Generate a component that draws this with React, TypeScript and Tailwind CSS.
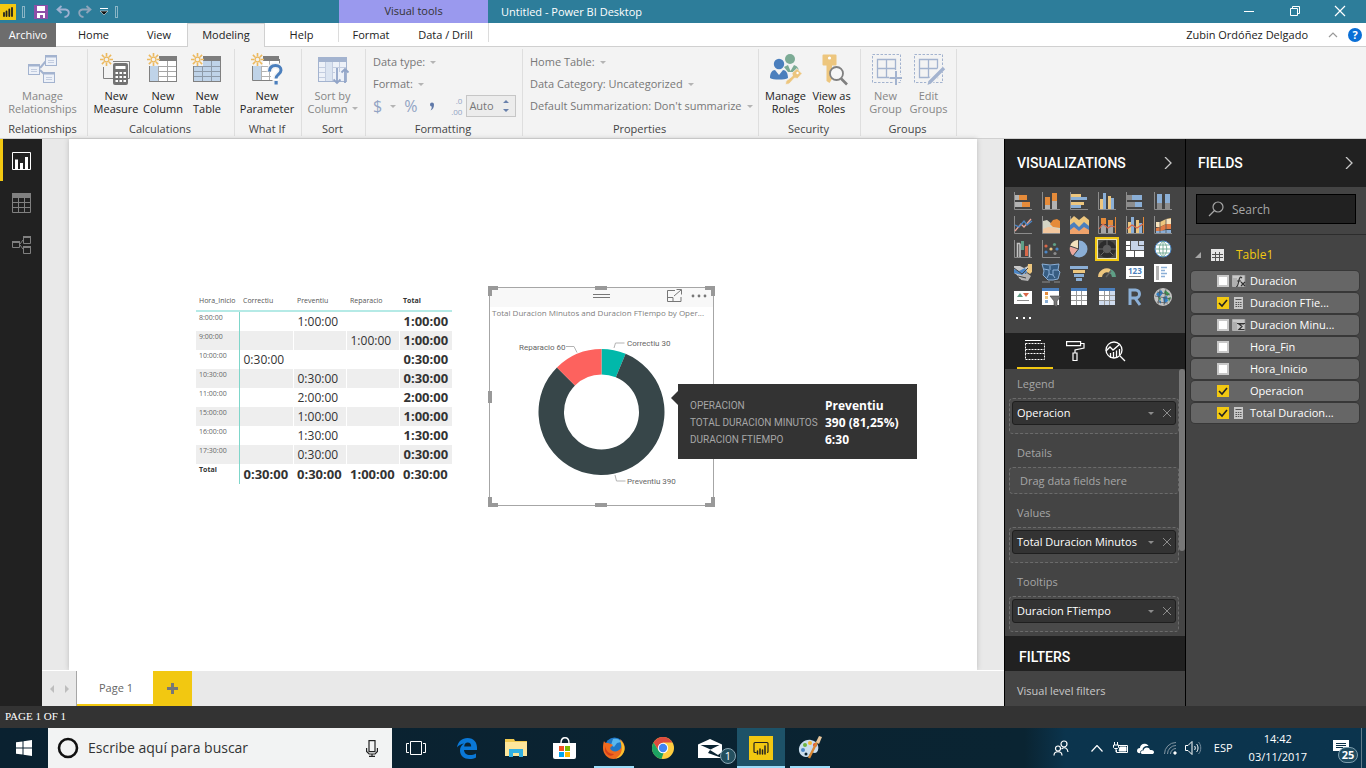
import React, { useState } from 'react';
import { clsx } from 'clsx';

// ── Small shared glyphs ───────────────────────────────────────────────────────
function Caret({ className = 'fill-[#b4b4b4]' }: { className?: string }) {
  return (
    <svg viewBox="0 0 6 3" className={clsx('w-[6px] h-[3px] shrink-0', className)}>
      <path d="M0 0h6L3 3z" />
    </svg>
  );
}

function Sun() {
  return (
    <g stroke="#ecb95f" strokeWidth="1.6" fill="none">
      <circle cx="6.5" cy="6.5" r="2.4" strokeWidth="1.2" />
      <path d="M6.5 0v3.4M6.5 9.6V13M0 6.5h3.4M9.6 6.5H13M1.9 1.9l2.3 2.3M8.8 8.8l2.3 2.3M1.9 11.1l2.3-2.3M8.8 4.2l2.3-2.3" />
    </g>
  );
}

// ── Ribbon icons (32 x 32) ────────────────────────────────────────────────────
const ribbonIcons: Record<string, React.ReactNode> = {
  relationships: (
    <g stroke="#a3b3cf" fill="#edf1f8">
      <path d="M13 15l6-7M13 17l6 6" strokeWidth="2" />
      <rect x="18.5" y="2.5" width="11" height="10" />
      <rect x="1.5" y="11.5" width="11" height="10" />
      <rect x="16.5" y="19.5" width="11" height="10" />
      <path d="M18 3.5h12M1 12.5h12M16 20.5h12" strokeWidth="2" />
      <path d="M21 7.5h6M21 9.5h6M4 16.5h6M4 18.5h6M19 24.5h6M19 26.5h6" stroke="#c3cde0" />
    </g>
  ),
  measure: (
    <g>
      <path d="M13 8.5h16.500v17h-4M3.500 14v11.500h10" fill="none" stroke="#808080" />
      <rect x="13" y="10" width="15" height="22" rx="2" fill="#737373" />
      <rect x="15.5" y="13" width="10" height="3" fill="#fff" />
      <path d="M15.500 20h2.500M19.500 20h2.500M23.500 20h2.500M15.500 24h2.500M19.500 24h2.500M23.500 24h2.500M15.500 28h2.500M19.500 28h2.500M23.500 28h2.500" stroke="#fff" strokeWidth="2" />
      <Sun />
    </g>
  ),
  column: (
    <g>
      <rect x="2.5" y="5.5" width="27" height="23" fill="#fff" stroke="#808080" />
      <rect x="3" y="8" width="8" height="20" fill="#bfd3e8" />
      <path d="M11.500 8v20M20.500 8v20M11 13.500h18M11 18.500h18M11 23.500h18" stroke="#a6a6a6" />
      <path d="M11 3h19v5H11z" fill="#7d7d7d" />
      <path d="M0 0h12v13H0z" fill="#f3f3f3" />
      <Sun />
    </g>
  ),
  table: (
    <g>
      <rect x="2.5" y="5.5" width="27" height="23" fill="#bfd3e8" stroke="#808080" />
      <path d="M11.500 8v20M20.500 8v20M3 13.500h26M3 18.500h26M3 23.500h26" stroke="#8d9aa8" />
      <path d="M11 3h19v5H11z" fill="#7d7d7d" />
      <path d="M0 0h12v13H0z" fill="#f3f3f3" />
      <Sun />
    </g>
  ),
  parameter: (
    <g>
      <path d="M1.500 12v15.500h20M28.500 6v6" fill="none" stroke="#808080" />
      <rect x="2" y="8" width="26" height="19" fill="#fff" />
      <rect x="2" y="12" width="8" height="15" fill="#bfd3e8" />
      <path d="M10.500 8v19M18.500 8v19M10 13.500h18M10 18.500h10M10 23.500h10" stroke="#b3b3b3" />
      <path d="M11 3h17v5H11z" fill="#7d7d7d" />
      <path d="M0 0h12v13H0z" fill="#f3f3f3" />
      <path d="M18.500 18.500c0-4 2.500-6 6-6s5.500 2 5.500 4.700c0 4-5 4.300-5 8.300" fill="none" stroke="#f3f3f3" strokeWidth="6" />
      <path d="M18.500 18.500c0-4 2.500-6 6-6s5.500 2 5.500 4.700c0 4-5 4.300-5 8.300" fill="none" stroke="#4b7fbd" strokeWidth="3" />
      <rect x="23.5" y="28" width="3.2" height="3.5" fill="#4b7fbd" />
      <Sun />
    </g>
  ),
  sort: (
    <g>
      <rect x="1.5" y="4.5" width="28" height="24" fill="#edf1f8" stroke="#a3b3cf" />
      <path d="M1 4h29v5H1z" fill="#a3b3cf" />
      <path d="M8.500 9v19M15.500 9v19M22.500 9v10M2 14.500h27M2 19.500h16M2 24.500h14" stroke="#c3cde0" />
      <path d="M9 9h6v19H9z" fill="#dbe4f1" />
      <path d="M20 15v15M16.500 26.500L20 30l3.500-3.500M28 30V16M24.500 19.500L28 16l3.500 3.500" fill="none" stroke="#91a4c7" strokeWidth="1.8" />
    </g>
  ),
  roles: (
    <g>
      <circle cx="20" cy="6" r="5" fill="#7cab95" />
      <path d="M14 14l4-2 2.500 6 3.500-6c3 1 5 3 5 7H18z" fill="#7cab95" />
      <circle cx="9" cy="11" r="5.2" fill="#4b7fbd" />
      <path d="M0 25c0-5 2-8 5-8l4 5 4-5c3 0 5 3 5 8-3 2-15 2-18 0z" fill="#4b7fbd" />
      <path d="M22 20l5-4.500 5 5-4.500 5-3-.5-5.500 6-3.500.5.500-3.500 6.500-5z" fill="#edc67e" stroke="#f3f3f3" strokeWidth=".8" />
      <circle cx="27.5" cy="20" r="1.2" fill="#fff" />
    </g>
  ),
  viewas: (
    <g>
      <path d="M7.500 1.500h12a1 1 0 011 1v9a1 1 0 01-1 1h-3.500V26l-2.500 4-3-2V12.500H7.500a1 1 0 01-1-1v-9a1 1 0 011-1z" fill="#edc67e" />
      <circle cx="13.5" cy="5" r="1.6" fill="#fff" />
      <circle cx="20.5" cy="20.5" r="6.5" fill="#f6f6f6" stroke="#808080" strokeWidth="1.8" />
      <path d="M25 25.500l6 6" stroke="#808080" strokeWidth="2.6" />
    </g>
  ),
  newgroup: (
    <g fill="none" stroke="#a3b3cf">
      <rect x="2.5" y="1.5" width="28" height="28" strokeDasharray="2.5 1.5" />
      <path d="M7.500 6.500h18v18h-18zM16.500 6.500v18M7.500 15.500h18" strokeWidth="1.3" />
      <path d="M26 17v15M19 24.500h14" stroke="#f3f3f3" strokeWidth="5" />
      <path d="M26 18v14M19.500 25h12.500" strokeWidth="2" />
    </g>
  ),
  editgroup: (
    <g fill="none" stroke="#a3b3cf">
      <rect x="1.5" y="1.5" width="28" height="28" strokeDasharray="2.5 1.5" />
      <path d="M6.500 6.500h18v18h-18zM15.500 6.500v18M6.500 15.500h18" strokeWidth="1.3" />
      <path d="M15 31L30 14" stroke="#f3f3f3" strokeWidth="6" />
      <path d="M16.500 29.500L31 15" strokeWidth="3.4" />
      <path d="M14.500 32l1-4 2.500 2.500z" fill="#a3b3cf" stroke="none" />
    </g>
  ),
};

interface RibbonButtonProps {
  icon: string;
  lines: string[];
  width: string;
  disabled?: boolean;
  caret?: boolean;
}

function RibbonButton({ icon, lines, width, disabled = false, caret = false }: RibbonButtonProps) {
  return (
    <button
      disabled={disabled}
      className={clsx('flex flex-col items-center justify-start shrink-0 pt-1 whitespace-nowrap', width, disabled ? 'text-[#868686]' : 'text-[#222]')}
    >
      <svg viewBox="0 0 32 32" className="w-8 h-8 mb-1 overflow-visible">{ribbonIcons[icon]}</svg>
      <span className="leading-[13px]">{lines[0]}</span>
      <span className="leading-[13px] flex items-center gap-1">
        {lines[1]}
        {caret && <Caret />}
      </span>
    </button>
  );
}

function RibbonGroup({ title, width, children }: { title: string; width: string; children: React.ReactNode }) {
  return (
    <section className={clsx('flex flex-col shrink-0 border-r border-[#dedede]', width)}>
      <div className="flex-1 flex justify-center pr-[2px]">{children}</div>
      <h2 className="text-center leading-[14px] pr-[2px] text-[#444]">{title}</h2>
    </section>
  );
}

function PropertyMenu({ label }: { label: string }) {
  return (
    <button disabled className="h-[22px] flex items-center gap-[5px] whitespace-nowrap">
      {label}
      <Caret />
    </button>
  );
}

function Ribbon() {
  return (
    <div className="h-[92px] shrink-0 bg-[#f3f3f3] border-b border-[#d0d0d0] flex pt-[2px] pb-[2px] text-[11px] text-[#777] overflow-hidden">
      <RibbonGroup title="Relationships" width="w-[88px]">
        <RibbonButton icon="relationships" lines={['Manage', 'Relationships']} width="w-[80px]" disabled />
      </RibbonGroup>
      <RibbonGroup title="Calculations" width="w-[147px]">
        <RibbonButton icon="measure" lines={['New', 'Measure']} width="w-12" />
        <RibbonButton icon="column" lines={['New', 'Column']} width="w-[46px]" />
        <RibbonButton icon="table" lines={['New', 'Table']} width="w-[42px]" />
      </RibbonGroup>
      <RibbonGroup title="What If" width="w-[67px]">
        <RibbonButton icon="parameter" lines={['New', 'Parameter']} width="w-16" />
      </RibbonGroup>
      <RibbonGroup title="Sort" width="w-16">
        <RibbonButton icon="sort" lines={['Sort by', 'Column']} width="w-14" disabled caret />
      </RibbonGroup>
      <RibbonGroup title="Formatting" width="w-[157px]">
        <div className="flex-1 pl-[7px] pt-[2px]">
          <PropertyMenu label="Data type:" />
          <PropertyMenu label="Format:" />
          <div className="h-[22px] flex items-center text-[#92a4c4]">
            <button disabled className="flex items-center gap-2 text-base" aria-label="Currency">
              <span>$</span>
              <Caret />
            </button>
            <button disabled className="ml-2 text-base" aria-label="Percent">%</button>
            <button disabled className="ml-3 w-2 h-[22px] flex items-center" aria-label="Thousands separator">
              <svg viewBox="0 0 6 9" className="w-[6px] h-[9px]">
                <path d="M1 2.500a2 2 0 114 0c0 3-1 5-3.500 6 1-1.500 1.300-2.500 1.200-4C1.700 4.500 1 3.500 1 2.500z" fill="#5f78a8" />
              </svg>
            </button>
            <label htmlFor="decimals" className="ml-3 mr-1 flex flex-col items-end text-[8px] leading-[11px] w-[13px]">
              <span>.0</span>
              <span>.00</span>
            </label>
            <div className="w-[50px] h-[22px] border border-[#c6c6c6] bg-[#ececec] flex items-center justify-between pl-[2px] pr-[6px] text-[#777]">
              <input id="decimals" disabled defaultValue="Auto" className="w-7 bg-transparent outline-none" />
              <svg viewBox="0 0 6 12" className="w-[6px] h-3 fill-[#6880ab]">
                <path d="M0 3l3-3 3 3zM0 9l3 3 3-3z" />
              </svg>
            </div>
          </div>
        </div>
      </RibbonGroup>
      <RibbonGroup title="Properties" width="w-[236px]">
        <div className="flex-1 pl-[7px] pt-[2px]">
          <PropertyMenu label="Home Table:" />
          <PropertyMenu label="Data Category: Uncategorized" />
          <PropertyMenu label="Default Summarization: Don't summarize" />
        </div>
      </RibbonGroup>
      <RibbonGroup title="Security" width="w-[102px]">
        <RibbonButton icon="roles" lines={['Manage', 'Roles']} width="w-[46px]" />
        <RibbonButton icon="viewas" lines={['View as', 'Roles']} width="w-[46px]" />
      </RibbonGroup>
      <RibbonGroup title="Groups" width="w-24">
        <RibbonButton icon="newgroup" lines={['New', 'Group']} width="w-[42px]" disabled />
        <RibbonButton icon="editgroup" lines={['Edit', 'Groups']} width="w-11" disabled />
      </RibbonGroup>
    </div>
  );
}

// ── Title bar and tabs ────────────────────────────────────────────────────────
function TitleBar() {
  return (
    <header className="h-[23px] shrink-0 bg-[#2d7d9a] flex text-white">
      <div className="w-[339px] flex items-center">
        <span className="w-4 h-4 bg-[#f2c811]">
          <svg viewBox="0 0 16 16" className="w-4 h-4">
            <path d="M4 12V9M6.500 12V7.500M9.300 12V5.500M12 12V4" stroke="#222" strokeWidth="1.8" strokeLinecap="round" />
          </svg>
        </span>
        <span className="ml-[6px] w-[3px] h-3 border border-[#8ab5c6]" />
        <button aria-label="Save" className="ml-[9px]">
          <svg viewBox="0 0 14 14" className="w-[14px] h-[14px]">
            <path d="M0 0h14v14H0z" fill="#8e4fa8" />
            <path d="M3 1h8v5H3zM3 8h8v5H9v-3H6v3H3z" fill="#fff" />
          </svg>
        </button>
        <button aria-label="Undo" className="ml-2">
          <svg viewBox="0 0 14 13" className="w-[14px] h-[13px]" fill="none" stroke="#9fb1d1" strokeWidth="1.8">
            <path d="M5.500 1L1.500 4.500l4 3.500M2 4.500h7.500c5 1 4 7-1 7.500" />
          </svg>
        </button>
        <button aria-label="Redo" className="ml-2">
          <svg viewBox="0 0 14 13" className="w-[14px] h-[13px]" fill="none" stroke="#8fa5bb" strokeWidth="1.8">
            <path d="M8.500 1l4 3.500-4 3.500M12 4.500H4.500c-5 1-4 7 1 7.500" />
          </svg>
        </button>
        <button aria-label="Customize toolbar" className="ml-2">
          <svg viewBox="0 0 8 7" className="w-2 h-[7px]">
            <path d="M0 .5h8" stroke="#fff" />
            <path d="M0 3h8L4 7z" fill="#111" stroke="#dfe9ed" strokeWidth=".6" />
          </svg>
        </button>
        <span className="ml-[7px] w-[3px] h-3 border border-[#8ab5c6]" />
      </div>
      <div className="w-[149px] bg-[#9a99ee] text-[#333] text-[11px] leading-[21px] text-center">Visual tools</div>
      <h1 className="flex-1 pl-[13px] text-[11px] leading-[23px]">Untitled - Power BI Desktop</h1>
      <div className="w-[138px] flex items-center justify-between pl-[15px] pr-5 pb-[2px]">
        <button aria-label="Minimize">
          <svg viewBox="0 0 12 12" className="w-3 h-3"><path d="M1 6.500h10" stroke="#fff" /></svg>
        </button>
        <button aria-label="Restore">
          <svg viewBox="0 0 12 12" className="w-3 h-3" fill="none" stroke="#fff"><path d="M1.500 3.500h7v7h-7zM3.500 3.500v-2h7v7h-2" /></svg>
        </button>
        <button aria-label="Close">
          <svg viewBox="0 0 12 12" className="w-3 h-3" stroke="#fff" strokeWidth="1.2"><path d="M1 1l10 10M11 1L1 11" /></svg>
        </button>
      </div>
    </header>
  );
}

function TabRow() {
  return (
    <nav className="h-6 shrink-0 bg-white flex text-[11px] text-[#222] shadow-[inset_0_-1px_0_#d0d0d0]">
      <button className="w-14 bg-[#6d6d6d] text-white">Archivo</button>
      <button className="w-[75px]">Home</button>
      <button className="w-14">View</button>
      <button className="w-[78px] bg-[#f3f3f3] border border-b-0 border-[#d0d0d0]">Modeling</button>
      <button className="w-[73px]">Help</button>
      <div className="w-[151px] flex border-x border-[#dcdcdc] mb-[5px]">
        <button className="w-16 h-6">Format</button>
        <button className="w-[85px] h-6">Data / Drill</button>
      </div>
      <div className="flex-1 flex items-center justify-end">
        <span className="mr-5">Zubin Ordóñez Delgado</span>
        <button aria-label="Collapse ribbon" className="mr-[10px]">
          <svg viewBox="0 0 10 6" className="w-[10px] h-[6px]" fill="none" stroke="#999" strokeWidth="1.2"><path d="M1 5l4-4 4 4" /></svg>
        </button>
        <button aria-label="Help" className="w-[14px] h-[14px] mr-1 rounded-full bg-[#0a6fd6] text-white font-bold leading-[14px]">?</button>
      </div>
    </nav>
  );
}

// ── View switcher on the left ─────────────────────────────────────────────────
function ViewBar() {
  return (
    <nav className="w-[42px] shrink-0 bg-[#212121] flex flex-col">
      <button aria-label="Report" className="h-[42px] border-l-[3px] border-[#f2c811] pl-[9px] pt-[2px]">
        <svg viewBox="0 0 20 20" className="w-5 h-5">
          <path d="M.5 1.500h18v17H.5z" fill="none" stroke="#fff" />
          <path d="M4.500 18V8.500M9.500 18v-6M14.500 18V6" stroke="#fff" strokeWidth="3" />
        </svg>
      </button>
      <button aria-label="Data" className="h-[42px] pl-3 pt-[2px]">
        <svg viewBox="0 0 20 20" className="w-5 h-5" stroke="#808080" fill="none">
          <path d="M.5.500h18v19H.5zM6.500 4v15M12.500 4v15M1 9.500h18M1 14.500h18" />
          <path d="M0 2.500h19" strokeWidth="5" />
        </svg>
      </button>
      <button aria-label="Relationships" className="h-[42px] pl-3 pt-[2px]">
        <svg viewBox="0 0 20 20" className="w-5 h-5" stroke="#808080" fill="none">
          <path d="M.5 6.500h7v6h-7zM11.500 1.500h7v7h-7zM11.500 11.500h7v7h-7zM8 9l3-4M8 10l3 4" />
          <path d="M0 7h8M11 2h8M11 12h8" strokeWidth="2" />
        </svg>
      </button>
    </nav>
  );
}

// ── Matrix visual ─────────────────────────────────────────────────────────────
const columns = ['Correctiu', 'Preventiu', 'Reparacio'];
const rows = [
  { hour: '8:00:00', cells: ['', '1:00:00', ''], total: '1:00:00' },
  { hour: '9:00:00', cells: ['', '', '1:00:00'], total: '1:00:00' },
  { hour: '10:00:00', cells: ['0:30:00', '', ''], total: '0:30:00' },
  { hour: '10:30:00', cells: ['', '0:30:00', ''], total: '0:30:00' },
  { hour: '11:00:00', cells: ['', '2:00:00', ''], total: '2:00:00' },
  { hour: '15:00:00', cells: ['', '1:00:00', ''], total: '1:00:00' },
  { hour: '16:00:00', cells: ['', '1:30:00', ''], total: '1:30:00' },
  { hour: '17:30:00', cells: ['', '0:30:00', ''], total: '0:30:00' },
];

function Matrix() {
  return (
    <table className="absolute left-[127px] top-[153px] w-[256px] table-fixed border-collapse text-left text-[#333]">
      <colgroup>
        <col className="w-[43px]" />
        <col className="w-[54px]" />
        <col className="w-[53px]" />
        <col className="w-[53px]" />
        <col className="w-[53px]" />
      </colgroup>
      <thead>
        <tr className="h-[19px] border-b-2 border-[#b5eae6] text-[7px] leading-[10px] text-[#555]">
          <th className="p-0 pl-[3px] font-normal">Hora_Inicio</th>
          {columns.map((column) => (
            <th key={column} className="p-0 pl-1 font-normal">{column}</th>
          ))}
          <th className="p-0 pl-1 font-bold text-[#333]">Total</th>
        </tr>
      </thead>
      <tbody className="text-xs leading-[19px]">
        {rows.map((row) => (
          <tr key={row.hour} className="h-[19px] even:bg-[#eee]">
            <th className="p-0 pl-[3px] pt-[1px] align-top text-[7px] leading-[10px] font-normal text-[#666] border-r border-[#7fd6ca]">{row.hour}</th>
            {row.cells.map((cell, i) => (
              <td key={i} className="p-0 pl-1 border-r border-white">{cell}</td>
            ))}
            <td className="p-0 pl-1 text-[13px] font-bold">{row.total}</td>
          </tr>
        ))}
        <tr className="h-5 text-[13px] font-bold">
          <th className="p-0 pl-[3px] pt-[1px] align-top text-[7px] leading-[10px] border-r border-[#7fd6ca]">Total</th>
          <td className="p-0 pl-1">0:30:00</td>
          <td className="p-0 pl-1">0:30:00</td>
          <td className="p-0 pl-1">1:00:00</td>
          <td className="p-0 pl-1">0:30:00</td>
        </tr>
      </tbody>
    </table>
  );
}

// ── Donut visual ──────────────────────────────────────────────────────────────
const slices = [
  { name: 'Correctiu', value: 30, color: '#01b8aa' },
  { name: 'Preventiu', value: 390, color: '#374649' },
  { name: 'Reparacio', value: 60, color: '#fd625e' },
];

function point(radius: number, fraction: number) {
  const angle = fraction * Math.PI * 2;
  return `${112.5 + radius * Math.sin(angle)} ${125 - radius * Math.cos(angle)}`;
}

function slicePath(start: number, end: number) {
  const large = end - start > 0.5 ? 1 : 0;
  return `M${point(63, start)}A63 63 0 ${large} 1 ${point(63, end)}L${point(37.5, end)}A37.5 37.5 0 ${large} 0 ${point(37.5, start)}Z`;
}

function Donut() {
  const total = slices.reduce((sum, slice) => sum + slice.value, 0);
  let start = 0;
  return (
    <section className="absolute left-[420px] top-[148px] w-[225px] h-[219px] border border-[#a6a6a6] bg-white">
      <div className="h-[19px] bg-[#f8f8f8]" />
      <h2 className="px-[2px] text-[8px] leading-3 text-[#808080] truncate">
        Total Duracion Minutos and Duracion FTiempo by Oper...
      </h2>
      <svg viewBox="0 0 225 219" className="absolute -left-px -top-px w-[225px] h-[219px] overflow-visible">
        {slices.map((slice) => {
          const end = start + slice.value / total;
          const path = slicePath(start, end);
          start = end;
          return <path key={slice.name} d={path} fill={slice.color} />;
        })}
        <g fill="none" stroke="#b3b3b3">
          <path d="M125 61l1.500-5h9M77 59.500h8l3 6M126 188l1.500 6h9" />
        </g>
        <g fontSize="8" fill="#666" className="font-['Roboto',sans-serif]">
          <text x="138" y="59">Correctiu 30</text>
          <text x="30" y="63">Reparacio 60</text>
          <text x="138" y="197">Preventiu 390</text>
        </g>
        {/* header grip, focus mode and menu dots */}
        <g stroke="#777" fill="none">
          <path d="M104 7.500h17M104 10.500h17" />
          <path d="M186 3.500h-7.500v11h13.500V10M178.500 10.500h5.500v4M185 9l7-6M187.500 2.500h5v5" />
        </g>
        <g fill="#777">
          <circle cx="204" cy="9" r="1.4" />
          <circle cx="210" cy="9" r="1.4" />
          <circle cx="216" cy="9" r="1.4" />
        </g>
        {/* resize handles */}
        <path
          d="M1 9V1h8M216 1h8v8M1 210v8h8M216 218h8v-8M106 1h12M106 218h12M1 104v12M224 104v12"
          fill="none"
          stroke="#999"
          strokeWidth="4"
        />
      </svg>
    </section>
  );
}

function ChartTooltip() {
  return (
    <div className="absolute left-[609px] top-[245px] w-[239px] h-[75px] bg-[#333] px-3 pt-[13px]">
      <svg viewBox="0 0 7 14" className="absolute -left-[7px] top-[7px] w-[7px] h-[14px]">
        <path d="M7 0v14L0 7z" fill="#333" />
      </svg>
      <dl className="grid grid-cols-[123px_1fr] gap-x-3 leading-[17px] whitespace-nowrap">
        <dt className="text-[10px] text-[#a6a6a6] font-['Roboto',sans-serif]">OPERACION</dt>
        <dd className="text-xs leading-[17px] font-bold text-white">Preventiu</dd>
        <dt className="text-[10px] text-[#a6a6a6] font-['Roboto',sans-serif]">TOTAL DURACION MINUTOS</dt>
        <dd className="text-xs leading-[17px] font-bold text-white">390 (81,25%)</dd>
        <dt className="text-[10px] text-[#a6a6a6] font-['Roboto',sans-serif]">DURACION FTIEMPO</dt>
        <dd className="text-xs leading-[17px] font-bold text-white">6:30</dd>
      </dl>
    </div>
  );
}

function Report() {
  return (
    <main className="flex-1 min-w-0 flex flex-col bg-[#e9e9e9]">
      <div className="relative flex-1 mx-[27px] bg-white shadow-[0_0_5px_#bbb]">
        <Matrix />
        <Donut />
        <ChartTooltip />
      </div>
      <div className="relative h-9 shrink-0 bg-[#e9e9e9] border-t border-white flex text-[11px] text-[#666]">
        <div className="w-[35px] flex items-center justify-center gap-[11px] border-r border-[#a6a6a6]">
          <button aria-label="Previous page">
            <svg viewBox="0 0 4 8" className="w-1 h-2 fill-[#bdbdbd]"><path d="M4 0v8L0 4z" /></svg>
          </button>
          <button aria-label="Next page">
            <svg viewBox="0 0 4 8" className="w-1 h-2 fill-[#bdbdbd]"><path d="M0 0v8l4-4z" /></svg>
          </button>
        </div>
        <button className="w-[76px] pt-[2px] pl-[2px] bg-white border-b-2 border-[#f2c811]">Page 1</button>
        <button aria-label="New page" className="w-[39px] bg-[#f2c811] flex items-center justify-center">
          <svg viewBox="0 0 11 11" className="w-[11px] h-[11px]"><path d="M5.500 0v11M0 5.500h11" stroke="#777" strokeWidth="3" /></svg>
        </button>
      </div>
    </main>
  );
}

// ── Visualizations pane ───────────────────────────────────────────────────────
const axis = <path d="M.5 0v17.500H18" fill="none" stroke="#8c8c8c" />;

const visuals: { name: string; art: React.ReactNode }[] = [
  { name: 'Stacked bar chart', art: <>{axis}<path d="M1 3h4v5H1zM1 10h7v5H1z" fill="#b3b3b3" /><path d="M5 3h8v5H5zM8 10h8v5H8z" fill="#e58b3a" /></> },
  { name: 'Stacked column chart', art: <>{axis}<path d="M3 13h5v4H3zM10 9h5v8h-5z" fill="#b3b3b3" /><path d="M3 5h5v8H3zM10 1h5v8h-5z" fill="#e58b3a" /></> },
  { name: 'Clustered bar chart', art: <>{axis}<path d="M1 2h10v3H1zM1 10h13v3H1z" fill="#edc67e" /><path d="M1 5h16v3H1zM1 13h10v3H1z" fill="#8bafd6" /></> },
  { name: 'Clustered column chart', art: <>{axis}<path d="M2 7h3v10H2zM10 4h3v13h-3z" fill="#edc67e" /><path d="M5 1h3v16H5zM13 6h3v11h-3z" fill="#8bafd6" /></> },
  { name: '100% stacked bar chart', art: <>{axis}<path d="M1 3h5v5H1zM1 10h8v5H1z" fill="#8c8c8c" /><path d="M6 3h10v5H6zM9 10h7v5H9z" fill="#8bafd6" /></> },
  { name: '100% stacked column chart', art: <>{axis}<path d="M3 11h5v6H3zM11 11h5v6h-5z" fill="#8c8c8c" /><path d="M3 2h5v9H3zM11 2h5v9h-5z" fill="#8bafd6" /></> },
  { name: 'Line chart', art: <>{axis}<path d="M1 15l6-7 3 3 7-8" fill="none" stroke="#e9a69a" strokeWidth="1.3" /><path d="M1 9l4 2 5-6 3 4 5-4" fill="none" stroke="#4b86c6" strokeWidth="1.3" /></> },
  { name: 'Area chart', art: <>{axis}<path d="M1 5l4-1 5 4 8-2v11H1z" fill="#d5d5c5" /><path d="M8 8l3-4 4-1 3 2v7l-7-1z" fill="#e58b3a" /><path d="M1 13l5-2 4 0 8 3v3H1z" fill="#f3c89f" /></> },
  { name: 'Stacked area chart', art: <>{axis}<path d="M0 4l4-4 5 4 5-4 5 4v8H0z" fill="#edc67e" /><path d="M0 9l4-3 5 5 5-5 5 4v7H0z" fill="#4b7fbd" /><path d="M0 14l4-3 5 4 5-4 5 3v4H0z" fill="#f0a36b" /></> },
  { name: 'Line and stacked column chart', art: <>{axis}<path d="M3 2h5v6H3zM10 4h5v5h-5z" fill="#e58b3a" /><path d="M3 9h5v8H3zM10 9h5v8h-5z" fill="#a6a6a6" /><path d="M1 13l4-5 5 4 3-2 4 1" fill="none" stroke="#d96849" strokeWidth="1.2" /><path d="M17.500 1v16" stroke="#e58b3a" /></> },
  { name: 'Line and clustered column chart', art: <>{axis}<path d="M2 6h3v11H2zM10 4h3v13h-3z" fill="#edc67e" /><path d="M5 1h3v16H5zM13 7h3v10h-3z" fill="#8bafd6" /><path d="M1 13l5-4 5 3 6-4" fill="none" stroke="#d96849" strokeWidth="1.3" /><path d="M17.500 1v16" stroke="#e58b3a" /></> },
  { name: 'Ribbon chart', art: <>{axis}<path d="M2 6l4 0 6-3 5-1v5l-5 1-6 3H2z" fill="#edc67e" /><path d="M2 12l4-1 6-3 5 0v5l-5 0-6 3H2z" fill="#e07b45" /><path d="M2 15h4l6-1h5v3H2z" fill="#8bafd6" /><path d="M2 6h4v5H2zM12 3h5v5h-5z" fill="#f7e3bd" /><path d="M6 6v11M12 3v14" stroke="#555" strokeWidth=".8" /></> },
  { name: 'Waterfall chart', art: <>{axis}<path d="M3.500 17V3.500H6M15.500 4.500V17M6 3.500V17" fill="none" stroke="#c4c4c4" strokeWidth="1.6" /><path d="M7 1h3v9H7z" fill="#5f9f86" /><path d="M11 6h3v10h-3z" fill="#d96849" /></> },
  { name: 'Scatter chart', art: <>{axis}<g fill="#d96849"><circle cx="4" cy="6" r="1.6" /><circle cx="10" cy="13" r="0" /></g><g fill="#5f9f86"><circle cx="12.5" cy="4.5" r="1.6" /></g><g fill="#edc67e"><circle cx="9" cy="9" r="1.6" /></g><g fill="#4b86c6"><circle cx="4" cy="12" r="1.6" /><circle cx="15" cy="9" r="1.6" /></g><circle cx="13" cy="13.500" r="1.6" fill="#8c8c8c" /></> },
  { name: 'Pie chart', art: <><circle cx="9" cy="9" r="8.5" fill="#8bafd6" /><path d="M8 9V0a9 9 0 00-8 6z" fill="#f3e2bd" /><path d="M8 9L0 6.500a9 9 0 003 9z" fill="#eba79c" /><path d="M8.500 9V0M8.500 9L0 6M8.500 9L3 16" stroke="#444" /></> },
  { name: 'Donut chart', art: <><path d="M0 0h18v18H0z" fill="#4a4a48" /><circle cx="9" cy="9" r="6.5" fill="none" stroke="#2c2c2c" strokeWidth="4.5" /><circle cx="9" cy="9" r="4" fill="#5c5c5c" /><path d="M9 0v5M0 9h5M13 9h5M3 15l3-3M15 15l-3-3" stroke="#777" strokeWidth=".8" /></> },
  { name: 'Treemap', art: <><path d="M0 1h18v16H0z" fill="#fff" /><path d="M4 1h8v9H4zM12 1h6v9h-6z" fill="#c6d4e8" /><path d="M0 10.500h18M4.500 1v9M12 5.500h6M12.500 1v5M8.500 10v7M0 5.500h4" stroke="#555" /></> },
  { name: 'Map', art: <><circle cx="9" cy="9" r="8" fill="#fff" stroke="#4b86c6" /><path d="M1 9h16M9 1v16M3 5h12M3 13h12M9 1c-5 4-5 12 0 16M9 1c5 4 5 12 0 16" fill="none" stroke="#5f9f86" strokeWidth=".8" /></> },
  { name: 'Filled map', art: <><path d="M0 2h6l4 2 4-2v6l-3 1v4l-5 2-3-4-3-2z" fill="#c9c9c9" /><path d="M0 5l5 2 6-3 2 4-5 3-8-2z" fill="#4b86c6" /><path d="M14 0h4v8l-2 2-3-2z" fill="#edc67e" /><path d="M6 12l7-3 4 3-3 5-7-1z" fill="#b3b3b3" /><path d="M0 4l8 6 6-6M4 12l8 2" fill="none" stroke="#444" /></> },
  { name: 'Shape map', art: <><path d="M0 0l8 1 9-1-1 6 2 2-2 7-5 1-5 0-5-5 1-4z" fill="#375d82" stroke="#8bafd6" /><path d="M2 5l5 1v4l4 1V6l5 0M7 10l-2 4M11 11l2 3M8 2v4" fill="none" stroke="#8bafd6" /><path d="M0 18h8M12 18h6" stroke="#8c8c8c" /></> },
  { name: 'Funnel', art: <><path d="M0 2h18v3H0zM4 10h10v3H4z" fill="#8bafd6" /><path d="M3 6h12v3H3z" fill="#edc67e" /><path d="M6 14h6v3H6z" fill="#8bafd6" /></> },
  { name: 'Gauge', art: <g fill="none" strokeWidth="4"><path d="M2 13a7 7 0 0110-6" stroke="#edc67e" /><path d="M12 7a7 7 0 014 6" stroke="#5f9f86" /><path d="M8 13l5-6" stroke="#666" strokeWidth="1.5" /></g> },
  { name: 'Card', art: <><path d="M0 2h18v13H0z" fill="#fff" /><text x="2" y="10" fontSize="8" fontWeight="700" fill="#4b7fbd">123</text><path d="M3 12.500h12" stroke="#8c8c8c" /></> },
  { name: 'Multi-row card', art: <><path d="M0 0h18v18H0z" fill="#fff" /><path d="M2 2h3v14H2z" fill="#b3b3b3" /><path d="M7 3.500h6M7 6.500h4M7 9.500h6M7 12.500h4" stroke="#8bafd6" strokeWidth="1.3" /></> },
  { name: 'KPI', art: <><path d="M0 3h18v13H0z" fill="#fff" /><path d="M3 9l3-4 3 4z" fill="#5f9f86" /><path d="M9 5h6l-3 4z" fill="#d96849" /><path d="M3 12.500h12" stroke="#8c8c8c" /></> },
  { name: 'Slicer', art: <><path d="M0 0h17v17H0z" fill="#fff" /><path d="M0 0h17v3H0z" fill="#4b7fbd" /><path d="M3 4h3v3H3z" fill="#e58b3a" /><path d="M3 8h3v3H3z" fill="#edc67e" /><path d="M3 12h3v3H3z" fill="#8bafd6" /><path d="M8 8h11l-4 5v6l-3-2v-4z" fill="#777" stroke="#444" strokeWidth=".6" /></> },
  { name: 'Table', art: <><path d="M1 0h16v17H1z" fill="#fff" /><path d="M1 0h16v3H1z" fill="#4b7fbd" /><path d="M6.500 3v14M11.500 3v14M1 7.500h16M1 12.500h16" stroke="#999" /></> },
  { name: 'Matrix', art: <><path d="M1 0h16v17H1z" fill="#fff" /><path d="M1 0h16v3H1z" fill="#4b7fbd" /><path d="M12 3h5v14h-5zM1 13h16v4H1z" fill="#cfdcee" /><path d="M6.500 3v14M11.500 3v14M1 7.500h16M1 12.500h16" stroke="#999" /></> },
  { name: 'R script visual', art: <path d="M4 17V2h5.500a4 4 0 010 8H4M9 10l5 7" fill="none" stroke="#8bafd6" strokeWidth="3" /> },
  { name: 'ArcGIS map', art: <><circle cx="9" cy="9" r="9" fill="#c4c4c4" /><path d="M2 6l5-4 2 3-4 5zM9 9l4-1 1 5-4 3zM4 12l3 1v3z" fill="#2e7fc6" /><path d="M11 2l5 4-3 2-3-3zM4 9l3 1-1 3zM14 10l3-1-2 5z" fill="#3c9a52" /><path d="M1 8l16 3M3 4l13 3M3 14l11 1M6 1l-2 15M12 1l-2 16" stroke="#555" strokeWidth=".7" /></> },
];

function Well({ label, field }: { label: string; field?: string }) {
  return (
    <div className="mb-[11px]">
      <h3 className="pl-2 mb-[6px] leading-4 text-[#a6a6a6]">{label}</h3>
      {field ? (
        <div className="h-9 px-[2px] pt-[2px] bg-[#4a4a4a] border border-dashed border-[#6b6b6b] rounded-sm">
          <div className="h-6 pl-1 pr-1 flex items-center bg-[#333] border border-[#1f1f1f] rounded-[3px] text-white">
            <span className="flex-1 whitespace-nowrap">{field}</span>
            <button aria-label={`${field} options`} className="w-4 flex justify-center">
              <Caret className="fill-[#8c8c8c]" />
            </button>
            <button aria-label={`Remove ${field}`} className="ml-1">
              <svg viewBox="0 0 8 8" className="w-2 h-2" stroke="#8c8c8c"><path d="M0 0l8 8M8 0L0 8" /></svg>
            </button>
          </div>
        </div>
      ) : (
        <div className="h-[27px] pl-[10px] leading-[26px] bg-[#4a4a4a] border border-dashed border-[#6b6b6b] rounded-sm text-[#a6a6a6]">
          Drag data fields here
        </div>
      )}
    </div>
  );
}

function PaneHeader({ title }: { title: string }) {
  return (
    <div className="h-12 shrink-0 pl-3 pr-[13px] bg-[#212121] flex items-center justify-between">
      <h2 className="text-sm font-medium text-white font-['Roboto',sans-serif]">{title}</h2>
      <button aria-label={`Collapse ${title}`}>
        <svg viewBox="0 0 8 12" className="w-2 h-3" fill="none" stroke="#c8c8c8" strokeWidth="1.3"><path d="M1 0l6 6-6 6" /></svg>
      </button>
    </div>
  );
}

function VisualizationsPane() {
  const [selected, setSelected] = useState('Donut chart');

  return (
    <aside className="w-[181px] shrink-0 flex flex-col bg-[#444] border-l border-black text-[11px]">
      <PaneHeader title="VISUALIZATIONS" />
      <div className="h-[146px] shrink-0 pl-1 pt-[2px]">
        <div className="grid grid-cols-[repeat(6,28px)] auto-rows-[24px]">
          {visuals.map((visual) => (
            <button
              key={visual.name}
              aria-label={visual.name}
              onClick={() => setSelected(visual.name)}
              className={clsx(
                'w-[22px] h-[22px] m-auto flex items-center justify-center',
                selected === visual.name && 'bg-[#e8e2b8] outline-2 -outline-offset-1 outline-[#f2c811]'
              )}
            >
              <svg viewBox="0 0 18 18" className="w-[18px] h-[18px] overflow-visible">{visual.art}</svg>
            </button>
          ))}
        </div>
        <button aria-label="More visuals" className="ml-[7px] mt-2 block">
          <svg viewBox="0 0 16 3" className="w-4 h-[3px] fill-white"><path d="M0 0h2v2H0zM7 0h2v2H7zM13 0h2v2h-2z" /></svg>
        </button>
      </div>
      <div className="h-9 shrink-0 bg-[#212121] flex pl-3 gap-1">
        <button aria-label="Fields" className="w-9 border-b-2 border-[#f2c811] flex justify-center items-center">
          <svg viewBox="0 0 21 20" className="w-[21px] h-5" fill="none" stroke="#fff">
            <path d="M0 .5h16" />
            <path d="M.5 3.500h19v6H.5zM.5 9.500v4h19v-4M.5 13.500v6h19v-6" strokeDasharray="2 1" />
          </svg>
        </button>
        <button aria-label="Format" className="w-9 flex justify-center items-center">
          <svg viewBox="0 0 19 20" className="w-[19px] h-5" fill="none" stroke="#fff" strokeWidth="1.2">
            <path d="M.6.600h14v4H.6zM14.600 2.500h3.400v4.500l-9 2v3M7 12h4v7.500H7z" />
          </svg>
        </button>
        <button aria-label="Analytics" className="w-9 flex justify-center items-center">
          <svg viewBox="0 0 21 21" className="w-[21px] h-[21px]" fill="none" stroke="#fff" strokeWidth="1.3">
            <circle cx="9" cy="9" r="8" />
            <path d="M15 15l5 5M1 10l4-4 3 3 7-6M5.500 17v-5M8.500 17v-6M11.500 17V9.500M14.500 14V8" />
          </svg>
        </button>
      </div>
      <div className="flex-1 min-h-0 overflow-hidden flex items-start">
        <div className="flex-1 pl-1 pt-[7px]">
          <Well label="Legend" field="Operacion" />
          <Well label="Details" />
          <Well label="Values" field="Total Duracion Minutos" />
          <Well label="Tooltips" field="Duracion FTiempo" />
        </div>
        <div className="w-[6px] h-[182px] bg-[#777] rounded-full" />
      </div>
      <h2 className="h-[35px] shrink-0 pl-[14px] pt-[3px] bg-[#212121] text-sm/9 font-medium text-white font-['Roboto',sans-serif]">FILTERS</h2>
      <div className="h-[35px] shrink-0 pl-3 leading-10 text-[#c8c8c8]">Visual level filters</div>
    </aside>
  );
}

// ── Fields pane ───────────────────────────────────────────────────────────────
const fields = [
  { name: 'Duracion', text: 'Duracion', icon: 'fx', checked: false },
  { name: 'ftiempo', text: 'Duracion FTie...', icon: 'calc', checked: true },
  { name: 'minutos', text: 'Duracion Minu...', icon: 'sum', checked: false },
  { name: 'fin', text: 'Hora_Fin', icon: '', checked: false },
  { name: 'inicio', text: 'Hora_Inicio', icon: '', checked: false },
  { name: 'operacion', text: 'Operacion', icon: '', checked: true },
  { name: 'total', text: 'Total Duracion...', icon: 'calc', checked: true },
];

function FieldIcon({ type }: { type: string }) {
  return (
    <svg viewBox="0 0 14 12" className="w-[14px] h-3 shrink-0">
      {type === 'calc' && (
        <>
          <path d="M2 0h9v12H2z" fill="#c8c8c8" />
          <path d="M3.500 2.500h6" stroke="#555" />
          <path d="M3.500 5.500h6M3.500 7.500h6M3.500 9.500h6" stroke="#555" strokeDasharray="1.5 .8" />
        </>
      )}
      {(type === 'fx' || type === 'sum') && <path d="M0 0h13v12H0zM2 3v8M4 3v8" fill="#c8c8c8" stroke="#8c8c8c" strokeWidth=".8" />}
      {type === 'fx' && <path d="M4 12c2 0 2-3 3-7s2-3 3-2M5 6h4M9 7l4 4M13 7l-4 4" fill="none" stroke="#333" strokeWidth="1.2" />}
      {type === 'sum' && <path d="M5 4.500h8M12 5H7l3 2.500L7 10.500h5.500" fill="none" stroke="#333" strokeWidth="1.2" />}
    </svg>
  );
}

function FieldsPane() {
  return (
    <aside className="w-[181px] shrink-0 flex flex-col bg-[#444] border-l border-black text-[11px]">
      <PaneHeader title="FIELDS" />
      <div className="px-[10px] pt-[7px] pb-[10px] border-b border-[#2c2c2c]">
        <label className="h-[30px] pl-[11px] flex items-center gap-2 bg-[#212121] border border-black">
          <svg viewBox="0 0 16 16" className="w-4 h-4 shrink-0" fill="none" stroke="#a6a6a6" strokeWidth="1.2">
            <circle cx="10" cy="6" r="5" />
            <path d="M6.500 9.500L1 15" />
          </svg>
          <input placeholder="Search" aria-label="Search" className="w-full min-w-0 pt-[2px] bg-transparent text-xs outline-none placeholder:text-[#a6a6a6]" />
        </label>
      </div>
      <div className="h-9 pt-[3px] pl-[9px] flex items-center text-xs text-[#f2c811]">
        <svg viewBox="0 0 6 6" className="w-[6px] h-[6px] mr-[10px]"><path d="M6 0v6H0z" fill="#a6a6a6" /></svg>
        <svg viewBox="0 0 13 12" className="w-[13px] h-3 mr-3">
          <path d="M0 0h13v12H0z" fill="#e6e6e6" />
          <path d="M4.500 3v9M8.500 3v9M1 5.500h11M1 8.500h11" stroke="#555" />
        </svg>
        Table1
      </div>
      <ul className="pl-[5px] pr-[7px] flex flex-col gap-[2px]">
        {fields.map((field) => (
          <li key={field.name}>
            <label className="h-5 pl-[26px] flex items-center bg-[#666] rounded-sm text-white shadow-[0_0_0_1px_#383838]">
              <span className="relative w-3 h-3 mr-[3px] shrink-0">
                <input
                  type="checkbox"
                  defaultChecked={field.checked}
                  className="peer block appearance-none w-3 h-3 bg-white border-2 border-[#c8c8c8] checked:bg-[#f2c811] checked:border-[#f2c811]"
                />
                <svg viewBox="0 0 12 12" className="absolute inset-0 w-3 h-3 hidden peer-checked:block pointer-events-none">
                  <path d="M2 6l3 3 5-6" fill="none" stroke="#222" strokeWidth="1.6" />
                </svg>
              </span>
              <FieldIcon type={field.icon} />
              <span className="ml-1">{field.text}</span>
            </label>
          </li>
        ))}
      </ul>
    </aside>
  );
}

// ── Windows taskbar ───────────────────────────────────────────────────────────
interface TaskProps {
  label: string;
  running?: boolean;
  active?: boolean;
  children: React.ReactNode;
}

function Task({ label, running, active, children }: TaskProps) {
  return (
    <button aria-label={label} className={clsx('relative w-12 h-10 shrink-0 flex items-center justify-center', active && 'bg-[#1d5268]')}>
      {children}
      {(running || active) && (
        <span className={clsx('absolute bottom-0 h-[2px] bg-[#9bdcf9]', active ? 'inset-x-0' : 'inset-x-1')} />
      )}
    </button>
  );
}

function Taskbar() {
  return (
    <footer className="h-10 shrink-0 flex bg-linear-to-r from-[#0a2130] via-[#0a2432] via-75% to-[#0b344d] to-78% text-[11px] text-white">
      <Task label="Start">
        <svg viewBox="0 0 16 16" className="w-4 h-4 fill-white"><path d="M0 2.300l6.500-.9v6.100H0zM7.500 1.200L16 0v7.500H7.500zM0 8.500h6.500v6.100L0 13.700zM7.500 8.500H16V16l-8.500-1.200z" /></svg>
      </Task>
      <label className="w-[344px] shrink-0 bg-[#f2f3f3] flex items-center pl-[9px] pr-[14px]">
        <svg viewBox="0 0 22 22" className="w-[22px] h-[22px] mr-[9px] shrink-0"><circle cx="11" cy="11" r="9" fill="none" stroke="#111" strokeWidth="2.6" /></svg>
        <input placeholder="Escribe aquí para buscar" aria-label="Buscar" className="flex-1 min-w-0 bg-transparent text-sm outline-none placeholder:text-[#333]" />
        <svg viewBox="0 0 12 17" className="w-3 h-[17px] shrink-0" fill="none" stroke="#222" strokeWidth="1.2"><rect x="3" y=".6" width="6" height="11" /><path d="M.6 8v3.500l2.500 2.500h6l2.300-2.500V8M6 14v2.400M3 16.400h6" /></svg>
      </label>
      <Task label="Task view">
        <svg viewBox="0 0 20 14" className="w-5 h-[14px]" fill="none" stroke="#fff"><path d="M4.500.500h11v13h-11zM3 2.500H.5v9H3M17 2.500h2.500v9H17" /></svg>
      </Task>
      <div className="ml-[3px] flex gap-px">
        <Task label="Edge">
          <svg viewBox="0 0 20 21" className="w-5 h-[21px] fill-[#0a78d7]">
            <path d="M0 9.500C1 3.500 5 0 10.500 0 17 0 20 4.500 20 9.500V12H7c.2 3 2.500 5 6 5 2.300 0 4-.5 6-1.600v4C17 20.500 15 21 12.500 21 7 21 3 17.500 3 12.500c0-3 1.500-5.500 4-7C4 6 1.500 7.500 0 9.500zM7.200 8.500h7c0-2.500-1.200-4-3.500-4-2 0-3.300 1.600-3.500 4z" />
          </svg>
        </Task>
        <Task label="File Explorer">
          <svg viewBox="0 0 22 20" className="w-[22px] h-5">
            <path d="M0 1h9l1 2h12v15H0z" fill="#f0c94f" />
            <path d="M0 4h22v14H0z" fill="#fde69b" />
            <path d="M4 11h14v8h-4v-4H8v4H4z" fill="#33b1e1" />
          </svg>
        </Task>
        <Task label="Store">
          <svg viewBox="0 0 24 24" className="w-6 h-6">
            <path d="M8 7c0-7 8-7 8 0" fill="none" stroke="#fff" strokeWidth="1.4" />
            <path d="M0 7h23v14a2 2 0 01-2 2H2a2 2 0 01-2-2z" fill="#fff" />
            <path d="M6 10h5v5H6z" fill="#f25022" /><path d="M12 10h5v5h-5z" fill="#7fba00" />
            <path d="M6 16h5v5H6z" fill="#00a4ef" /><path d="M12 16h5v5h-5z" fill="#ffb900" />
          </svg>
        </Task>
        <Task label="Firefox" running>
          <svg viewBox="0 0 22 22" className="w-[22px] h-[22px]">
            <circle cx="11.5" cy="10" r="9.5" fill="#1f78c8" />
            <path d="M10 2c3-1 7 0 8 3l-4 1-3 4-3-2z" fill="#5ab8ef" />
            <path d="M1 4c1 2 2 2 4 2l3 1 2 1-3 3c1 4 8 5 11 0 1-3 0-6-1-9 4 3 5 7 4.500 10-1 6-5.500 10-11 10C4.500 22 0 17 0 11c0-3 .3-5 1-7z" fill="#ef6a1f" />
            <path d="M17 3c4 3 5 7 4.500 10-1 5-5 8-9 8.500 5-3 7-7 6-13z" fill="#fbc02d" />
            <path d="M2 9c1 5 4 8 9 8-2 3-7 2-9-3z" fill="#d6401c" />
          </svg>
        </Task>
        <Task label="Chrome">
          <svg viewBox="0 0 22 22" className="w-[22px] h-[22px]">
            <circle cx="11" cy="11" r="11" fill="#ffcd40" />
            <path d="M1.500 5.500A11 11 0 0120.500 5.500H11L6.500 13.500z" fill="#dd4b3e" />
            <path d="M1.500 5.500L6.500 13.500l5 2.500L9.500 22A11 11 0 011.500 5.500z" fill="#1da362" />
            <circle cx="11" cy="11" r="5.2" fill="#fff" /><circle cx="11" cy="11" r="4.2" fill="#4285f4" />
          </svg>
        </Task>
        <Task label="Mail">
          <svg viewBox="0 0 24 19" className="w-6 h-[19px] mr-1"><path d="M0 5.500L12 0l12 5.500V19H0z" fill="#fff" /><path d="M2.500 6h19l-9 4.500z" fill="#0a2432" /><path d="M12 11l-2 3 14 5V9z" fill="#0a2432" /><path d="M12 11l12-4v6l-4 3z" fill="#fff" /></svg>
          <span className="absolute right-0 bottom-1 w-4 h-4 rounded-full border border-[#8ba6b3] bg-[#24505f] leading-[14px]">1</span>
        </Task>
        <Task label="Power BI Desktop" active>
          <svg viewBox="0 0 24 24" className="w-6 h-6">
            <path d="M0 0h24v24H0z" fill="#f2c811" />
            <path d="M7.500 16.500H6a1 1 0 01-1-1v-8a1 1 0 011-1h12a1 1 0 011 1v8a1 1 0 01-1 1" fill="none" stroke="#222" strokeWidth="1.2" />
            <path d="M8.500 18v-3M11 18v-5M13.500 18v-4M16 18v-8" stroke="#222" strokeWidth="1.5" strokeLinecap="round" />
          </svg>
        </Task>
        <Task label="Paint" running>
          <svg viewBox="0 0 24 24" className="w-6 h-6">
            <path d="M1 15C0 8 7 3 13 4c7 1 9 8 6 12-2 2-4 0-6 1s-1 4-4 4c-4 0-7-2-8-6z" fill="#c9dded" />
            <circle cx="5" cy="14" r="2" fill="#4b86c6" /><circle cx="7" cy="9" r="2" fill="#6db33f" />
            <circle cx="12" cy="7" r="2" fill="#f2b632" /><circle cx="17" cy="9" r="2" fill="#e0452b" /><circle cx="8" cy="18" r="1.5" fill="#0a2432" />
            <path d="M11 22l8-16" stroke="#d98733" strokeWidth="2.4" /><path d="M18 6l3-6 3 1-3 7z" fill="#e8c79d" />
          </svg>
        </Task>
      </div>
      <div className="ml-auto h-full flex items-center">
        <svg viewBox="0 0 16 16" className="w-4 h-4 mr-[22px]" fill="none" stroke="#fff" strokeWidth="1.2"><circle cx="11" cy="4" r="3" /><path d="M8.500 9c3-2.500 6-1 6.500 3" /><circle cx="5" cy="8.5" r="2.5" /><path d="M1 15.500c0-5 8-5 8 0" /></svg>
        <svg viewBox="0 0 12 7" className="w-3 h-[7px] mr-[10px]" fill="none" stroke="#fff" strokeWidth="1.2"><path d="M.5 6.500l5.500-6 5.500 6" /></svg>
        <svg viewBox="0 0 16 12" className="w-4 h-3 mr-2" fill="none" stroke="#fff"><path d="M6 3.500h8.500v7h-11V8" /><path d="M7 5h6v4H6z" fill="#fff" /><path d="M1.500 0v3M4.500 0v3M.5 3h5v2.500l-1 1h-3l-1-1zM3 7v3" /></svg>
        <svg viewBox="0 0 17 11" className="w-[17px] h-[11px] mr-[10px] fill-white"><path d="M0 8c0-2 1-3 3-3 0-3 3-5 6-4 1 .3 2 1 2.500 2-4-.5-6 1.500-6 4C3 7.500 3 9 3.500 10 1.500 10.500 0 9.500 0 8z" /><path d="M5 11c-2-1-1-4 1.500-3.500C7 4 12 3.500 13 7c3-.5 4 1 4 2.200 0 1-.8 1.800-2 1.800z" /></svg>
        <svg viewBox="0 0 13 13" className="w-[13px] h-[13px] mr-2" fill="none" stroke="#8396a3"><path d="M.5 12A11.500 11.500 0 0112 .5M3.500 12A8.500 8.500 0 0112 3.500M6.500 12A5.500 5.500 0 0112 6.500" /><circle cx="11" cy="11" r="1.2" fill="#fff" stroke="#fff" /></svg>
        <svg viewBox="0 0 17 14" className="w-[17px] h-[14px] mr-3" fill="none" stroke="#fff"><path d="M.5 4.500H3l4-4v13l-4-4H.5zM9.500 5c1 1 1 3 0 4M11.500 3c2 2 2 6 0 8" /><path d="M13.500 1c3 3 3 9 0 12" stroke="#71899a" /></svg>
        <span>ESP</span>
        <div className="ml-4 mr-[26px] leading-[18px] text-center">
          <div>14:42</div>
          <div>03/11/2017</div>
        </div>
        <button aria-label="Notifications" className="relative w-[26px] h-[26px]">
          <svg viewBox="0 0 16 15" className="w-4 h-[15px] absolute left-0 top-[5px]"><path d="M0 0h16v11h-5l-3 3v-3H0z" fill="#fff" /><path d="M3 3.500h10M3 5.500h10M3 7.500h7" stroke="#0b3148" /></svg>
          <span className="absolute left-[5px] top-3 w-5 h-4 rounded-full border border-[#7d9dad] bg-[#1f4b60] font-bold leading-[14px]">25</span>
        </button>
        <span className="ml-[2px] mr-1 h-full w-px bg-[#617b8a]" />
      </div>
    </footer>
  );
}

export default function App() {
  return (
    <div className="h-screen flex flex-col overflow-hidden bg-[#444] font-['Open_Sans','Noto_Sans',sans-serif]">
      <TitleBar />
      <TabRow />
      <Ribbon />
      <div className="flex-1 min-h-0 flex">
        <ViewBar />
        <Report />
        <VisualizationsPane />
        <FieldsPane />
      </div>
      <div className="h-[22px] shrink-0 pl-[5px] bg-[#333] text-white text-[11px] leading-5 font-['Liberation_Serif',serif]">PAGE 1 OF 1</div>
      <Taskbar />
    </div>
  );
}
